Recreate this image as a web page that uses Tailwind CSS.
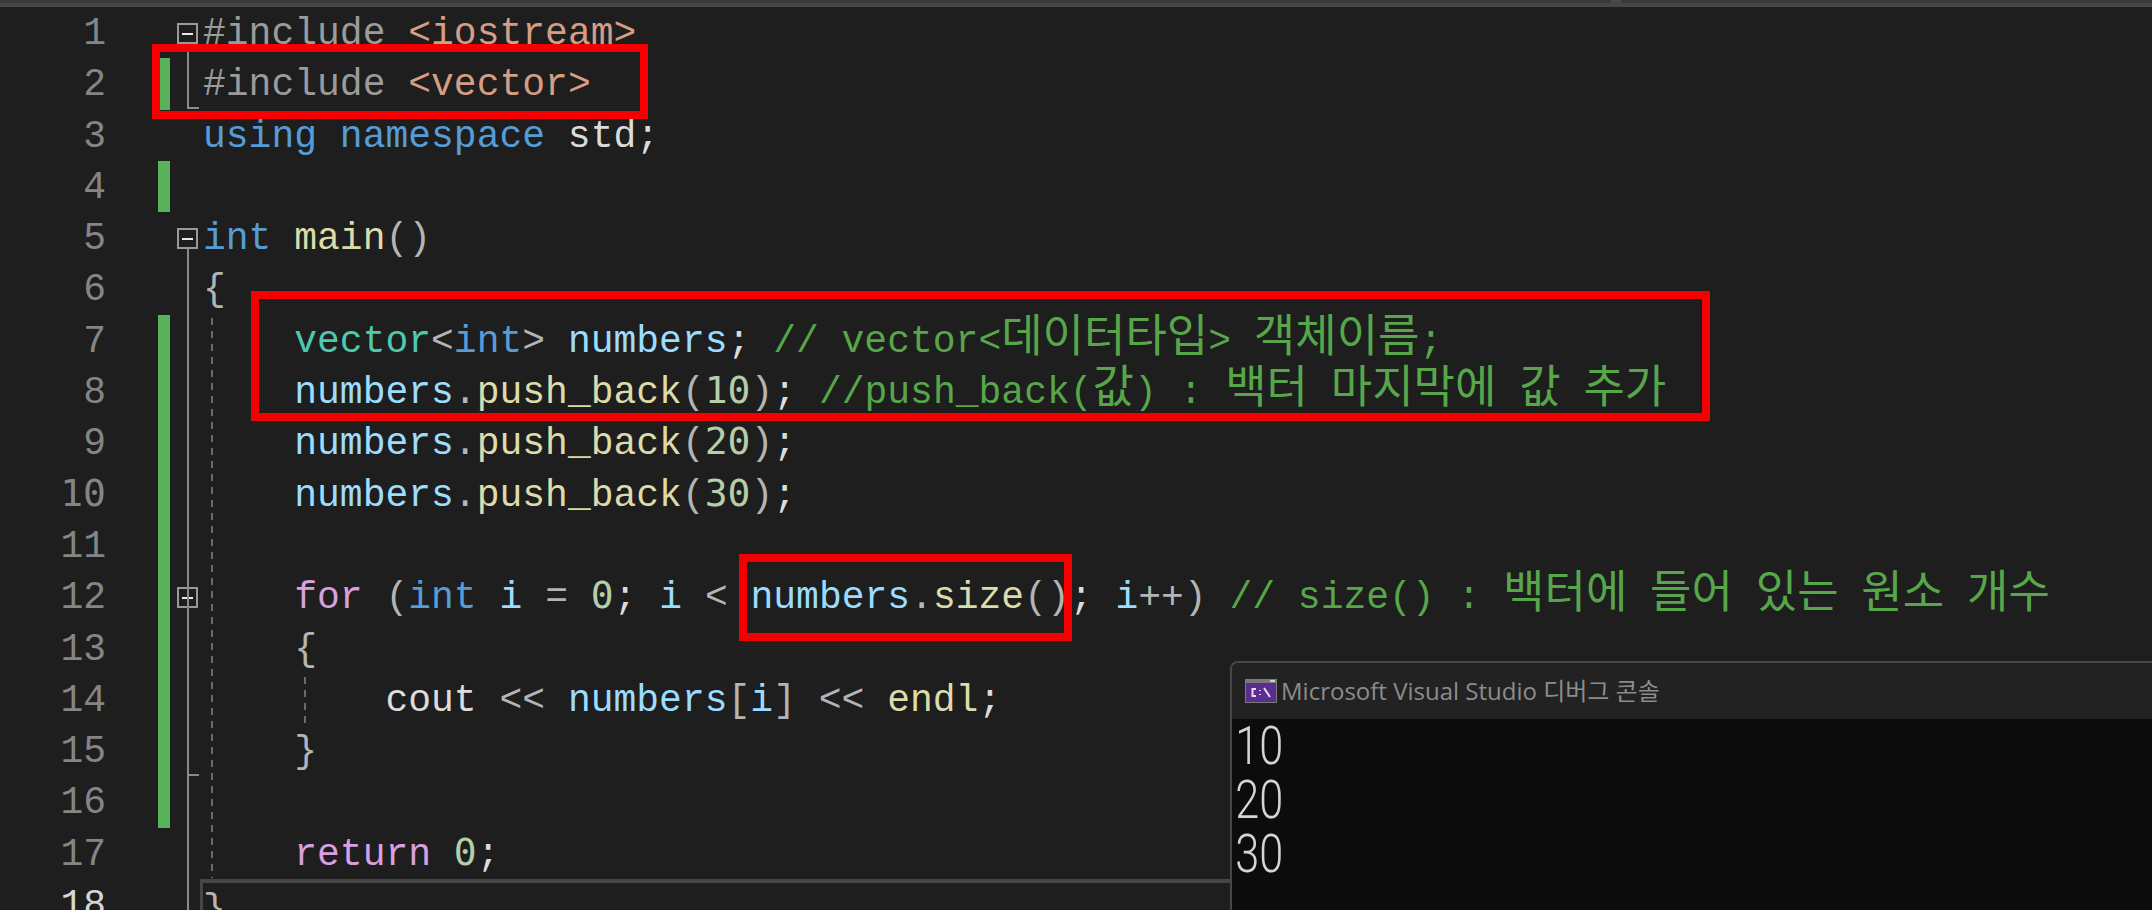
<!DOCTYPE html>
<html lang="ko">
<head>
    <meta charset="UTF-8">
    <title>vector example</title>
    <script src="https://cdn.jsdelivr.net/npm/@tailwindcss/browser@4"></script>
</head>
<body class="bg-[#1e1e1e] overflow-hidden">
<div class="relative h-[910px] w-[2152px] overflow-hidden bg-[#1e1e1e] font-['Liberation_Mono','Noto_Sans_CJK_KR',monospace] text-[38px] leading-[53px] text-[#dcdcdc]">
    <div class="relative h-[7px] border-t-[3px] border-[#3a3a3a] bg-[#464646]">
        <div class="absolute -top-[3px] left-[1611px] h-[3px] w-[10px] bg-[#4a4a4a]"></div>
    </div>

    <!-- editor rows -->
    <div class="flex h-[51.3px]">
        <div class="w-[106px] text-right text-[#858585]">1</div>
        <div class="ml-[52px] w-[12px]"></div>
        <div class="w-[33px] pl-[7px] pt-[16px]"><div class="flex h-[21px] w-[21px] items-center justify-center border-2 border-[#999999]"><div class="h-[2px] w-[11px] bg-[#e8e8e8]"></div></div></div>
        <div class="whitespace-pre"><span class="text-[#9b9b9b]">#include</span> <span class="text-[#d69d85]">&lt;iostream&gt;</span></div>
    </div>
    <div class="flex h-[51.3px]">
        <div class="w-[106px] text-right text-[#858585]">2</div>
        <div class="ml-[52px] w-[12px] bg-[#57b25b]"></div>
        <div class="w-[33px]"></div>
        <div class="whitespace-pre"><span class="text-[#9b9b9b]">#include</span> <span class="text-[#d69d85]">&lt;vector&gt;</span></div>
    </div>
    <div class="flex h-[51.3px]">
        <div class="w-[106px] text-right text-[#858585]">3</div>
        <div class="ml-[52px] w-[12px]"></div>
        <div class="w-[33px]"></div>
        <div class="whitespace-pre"><span class="text-[#569cd6]">using namespace</span> std;</div>
    </div>
    <div class="flex h-[51.3px]">
        <div class="w-[106px] text-right text-[#858585]">4</div>
        <div class="ml-[52px] w-[12px] bg-[#57b25b]"></div>
    </div>
    <div class="flex h-[51.3px]">
        <div class="w-[106px] text-right text-[#858585]">5</div>
        <div class="ml-[52px] w-[12px]"></div>
        <div class="w-[33px] pl-[7px] pt-[16px]"><div class="flex h-[21px] w-[21px] items-center justify-center border-2 border-[#999999]"><div class="h-[2px] w-[11px] bg-[#e8e8e8]"></div></div></div>
        <div class="whitespace-pre"><span class="text-[#569cd6]">int</span> <span class="text-[#dcdcaa]">main</span><span class="text-[#b4b4b4]">()</span></div>
    </div>
    <div class="flex h-[51.3px]">
        <div class="w-[106px] text-right text-[#858585]">6</div>
        <div class="ml-[52px] w-[12px]"></div>
        <div class="w-[33px]"></div>
        <div class="whitespace-pre text-[#b4b4b4]">{</div>
    </div>
    <div class="flex h-[51.3px]">
        <div class="w-[106px] text-right text-[#858585]">7</div>
        <div class="ml-[52px] w-[12px] bg-[#57b25b]"></div>
        <div class="w-[33px]"></div>
        <div class="whitespace-pre">    <span class="text-[#4ec9b0]">vector</span><span class="text-[#b4b4b4]">&lt;</span><span class="text-[#569cd6]">int</span><span class="text-[#b4b4b4]">&gt;</span> <span class="text-[#9cdcfe]">numbers</span>; <span class="text-[#57a64a]">// vector&lt;<span class="text-[45px] leading-none">데이터타입</span>&gt; <span class="text-[45px] leading-none">객체이름</span>;</span></div>
    </div>
    <div class="flex h-[51.3px]">
        <div class="w-[106px] text-right text-[#858585]">8</div>
        <div class="ml-[52px] w-[12px] bg-[#57b25b]"></div>
        <div class="w-[33px]"></div>
        <div class="whitespace-pre">    <span class="text-[#9cdcfe]">numbers</span><span class="text-[#b4b4b4]">.</span><span class="text-[#dcdcaa]">push_back</span><span class="text-[#b4b4b4]">(</span><span class="font-['DejaVu_Sans_Mono'] leading-none text-[#b5cea8]">10</span><span class="text-[#b4b4b4]">)</span>; <span class="text-[#57a64a]">//push_back(<span class="text-[45px] leading-none">값</span>) : <span class="text-[45px] leading-none">백터</span> <span class="text-[45px] leading-none">마지막에</span> <span class="text-[45px] leading-none">값</span> <span class="text-[45px] leading-none">추가</span></span></div>
    </div>
    <div class="flex h-[51.3px]">
        <div class="w-[106px] text-right text-[#858585]">9</div>
        <div class="ml-[52px] w-[12px] bg-[#57b25b]"></div>
        <div class="w-[33px]"></div>
        <div class="whitespace-pre">    <span class="text-[#9cdcfe]">numbers</span><span class="text-[#b4b4b4]">.</span><span class="text-[#dcdcaa]">push_back</span><span class="text-[#b4b4b4]">(</span><span class="font-['DejaVu_Sans_Mono'] leading-none text-[#b5cea8]">20</span><span class="text-[#b4b4b4]">)</span>;</div>
    </div>
    <div class="flex h-[51.3px]">
        <div class="w-[106px] text-right text-[#858585]"><span class="font-['DejaVu_Sans_Mono'] leading-none">10</span></div>
        <div class="ml-[52px] w-[12px] bg-[#57b25b]"></div>
        <div class="w-[33px]"></div>
        <div class="whitespace-pre">    <span class="text-[#9cdcfe]">numbers</span><span class="text-[#b4b4b4]">.</span><span class="text-[#dcdcaa]">push_back</span><span class="text-[#b4b4b4]">(</span><span class="font-['DejaVu_Sans_Mono'] leading-none text-[#b5cea8]">30</span><span class="text-[#b4b4b4]">)</span>;</div>
    </div>
    <div class="flex h-[51.3px]">
        <div class="w-[106px] text-right text-[#858585]">11</div>
        <div class="ml-[52px] w-[12px] bg-[#57b25b]"></div>
    </div>
    <div class="flex h-[51.3px]">
        <div class="w-[106px] text-right text-[#858585]">12</div>
        <div class="ml-[52px] w-[12px] bg-[#57b25b]"></div>
        <div class="w-[33px] pl-[7px] pt-[16px]"><div class="flex h-[21px] w-[21px] items-center justify-center border-2 border-[#999999]"><div class="h-[2px] w-[11px] bg-[#e8e8e8]"></div></div></div>
        <div class="whitespace-pre">    <span class="text-[#d8a0df]">for</span> <span class="text-[#b4b4b4]">(</span><span class="text-[#569cd6]">int</span> <span class="text-[#9cdcfe]">i</span> <span class="text-[#b4b4b4]">=</span> <span class="font-['DejaVu_Sans_Mono'] leading-none text-[#b5cea8]">0</span>; <span class="text-[#9cdcfe]">i</span> <span class="text-[#b4b4b4]">&lt;</span> <span class="text-[#9cdcfe]">numbers</span><span class="text-[#b4b4b4]">.</span><span class="text-[#dcdcaa]">size</span><span class="text-[#b4b4b4]">()</span>; <span class="text-[#9cdcfe]">i</span><span class="text-[#b4b4b4]">++)</span> <span class="text-[#57a64a]">// size() : <span class="text-[45px] leading-none">백터에</span> <span class="text-[45px] leading-none">들어</span> <span class="text-[45px] leading-none">있는</span> <span class="text-[45px] leading-none">원소</span> <span class="text-[45px] leading-none">개수</span></span></div>
    </div>
    <div class="flex h-[51.3px]">
        <div class="w-[106px] text-right text-[#858585]">13</div>
        <div class="ml-[52px] w-[12px] bg-[#57b25b]"></div>
        <div class="w-[33px]"></div>
        <div class="whitespace-pre text-[#b4b4b4]">    {</div>
    </div>
    <div class="flex h-[51.3px]">
        <div class="w-[106px] text-right text-[#858585]">14</div>
        <div class="ml-[52px] w-[12px] bg-[#57b25b]"></div>
        <div class="w-[33px]"></div>
        <div class="whitespace-pre">        cout <span class="text-[#b4b4b4]">&lt;&lt;</span> <span class="text-[#9cdcfe]">numbers</span><span class="text-[#b4b4b4]">[</span><span class="text-[#9cdcfe]">i</span><span class="text-[#b4b4b4]">]</span> <span class="text-[#b4b4b4]">&lt;&lt;</span> <span class="text-[#dcdcaa]">endl</span>;</div>
    </div>
    <div class="flex h-[51.3px]">
        <div class="w-[106px] text-right text-[#858585]">15</div>
        <div class="ml-[52px] w-[12px] bg-[#57b25b]"></div>
        <div class="w-[33px]"></div>
        <div class="whitespace-pre text-[#b4b4b4]">    }</div>
    </div>
    <div class="flex h-[51.3px]">
        <div class="w-[106px] text-right text-[#858585]">16</div>
        <div class="ml-[52px] w-[12px] bg-[#57b25b]"></div>
    </div>
    <div class="flex h-[51.3px]">
        <div class="w-[106px] text-right text-[#858585]">17</div>
        <div class="ml-[52px] w-[12px]"></div>
        <div class="w-[33px]"></div>
        <div class="whitespace-pre">    <span class="text-[#d8a0df]">return</span> <span class="font-['DejaVu_Sans_Mono'] leading-none text-[#b5cea8]">0</span>;</div>
    </div>
    <div class="flex h-[51.3px]">
        <div class="w-[106px] text-right text-[#d6d6d6]">18</div>
        <div class="ml-[52px] w-[12px]"></div>
        <div class="w-[30px]"></div>
        <div class="grow whitespace-pre border-l-[3px] border-t-4 border-[#464646] text-[#b4b4b4]">}</div>
    </div>

    <!-- outlining and indent guides -->
    <div class="absolute left-[187px] top-[52px] h-[57px] w-[2px] bg-[#8a8a8a]"></div>
    <div class="absolute left-[187px] top-[107px] h-[2px] w-[12px] bg-[#8a8a8a]"></div>
    <div class="absolute left-[187px] top-[249px] h-[661px] w-[2px] bg-[#8a8a8a]"></div>
    <div class="absolute left-[187px] top-[774px] h-[2px] w-[12px] bg-[#8a8a8a]"></div>
    <div class="absolute left-[211px] top-[318px] h-[560px] w-[2px] bg-[repeating-linear-gradient(to_bottom,#6a6a6a_0_7px,transparent_7px_13px)]"></div>
    <div class="absolute left-[304px] top-[677px] h-[46px] w-[2px] bg-[repeating-linear-gradient(to_bottom,#6a6a6a_0_7px,transparent_7px_13px)]"></div>

    <!-- red annotation boxes -->
    <div class="absolute left-[152px] top-[44px] h-[75px] w-[496px] border-8 border-[#f40000]"></div>
    <div class="absolute left-[251px] top-[291px] h-[130px] w-[1459px] border-8 border-[#f40000]"></div>
    <div class="absolute left-[739px] top-[554px] h-[87px] w-[333px] border-8 border-[#f40000]"></div>

    <!-- debug console window -->
    <div class="absolute left-[1230px] top-[661px] flex h-[249px] w-[922px] flex-col overflow-hidden rounded-tl-lg border-l-2 border-t-2 border-[#474747] bg-[#0c0c0c]">
        <div class="flex h-[56px] items-center gap-[4px] bg-[#222222] pl-[13px] font-['Open_Sans','Noto_Sans_CJK_KR',sans-serif] text-[24px] leading-none text-[#8c8c8c]">
            <svg width="32" height="24" viewBox="0 0 32 24" class="shrink-0">
                <rect width="32" height="24" fill="#7a7a7a"/>
                <rect x="1" y="4" width="30" height="19" fill="#5c2d91"/>
                <rect x="25" y="1" width="5" height="2" fill="#d0d0d0"/>
                <path d="M11 10H7.5V17H11M15 11V12M15 15V16M19 9L25 18" fill="none" stroke="#e4dcef" stroke-width="2"/>
            </svg>
            <span>Microsoft Visual Studio 디버그 콘솔</span>
        </div>
        <div class="origin-top-left scale-x-[.8] pl-[4px] font-['Roboto',sans-serif] text-[54px] font-light leading-[54px] text-[#d4d4d4]">
            <div>10</div>
            <div>20</div>
            <div>30</div>
        </div>
    </div>
</div>
</body>
</html>
